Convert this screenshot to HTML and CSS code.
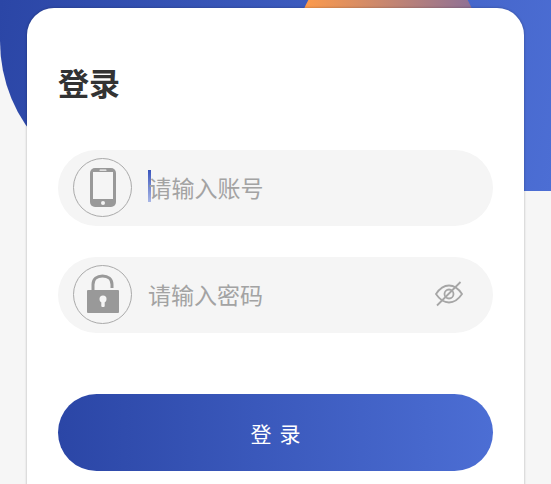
FILE: index.html
```html
<!DOCTYPE html>
<html lang="zh">
<head>
<meta charset="utf-8">
<title>登录</title>
<link rel="stylesheet" href="styles.css">
</head>
<body>
<div class="hero"><div class="sun"></div></div>
<main class="card">
  <h1 class="title">登录</h1>
  <div class="field">
    <span class="badge">
      <svg class="phone" width="28" height="41" viewBox="0 0 28 41"><rect x="1" y="1" width="26" height="39" rx="5" fill="#999"/><rect x="4" y="5" width="20" height="27" fill="#f5f5f5"/><rect x="10.5" y="2.6" width="7" height="1.2" rx=".6" fill="#f5f5f5"/><circle cx="14" cy="36" r="2" fill="#f5f5f5"/></svg>
    </span>
    <span class="caret"></span>
    <span class="hint">请输入账号</span>
  </div>
  <div class="field">
    <span class="badge">
      <svg class="lock" width="34" height="40" viewBox="0 0 34 40"><path d="M7 16V10.500C7 5 11 2 16.500 2S26 5 26 10.500V14" fill="none" stroke="#999" stroke-width="3"/><rect x="1" y="16" width="32" height="23" rx="1" fill="#999"/><circle cx="17" cy="25" r="3.500" fill="#f5f5f5"/><rect x="15.300" y="26" width="3.400" height="7" rx="1" fill="#f5f5f5"/></svg>
    </span>
    <span class="hint hint-gap">请输入密码</span>
    <svg class="eye" width="30" height="28" viewBox="0 0 30 28"><path d="M2 14C6 8 10 5.500 15 5.500S24 8 28 14C24 20 20 22.500 15 22.500S6 20 2 14Z" fill="none" stroke="#a6a6a6" stroke-width="1.800"/><circle cx="15" cy="14" r="4.500" fill="none" stroke="#a6a6a6" stroke-width="1.800"/><path d="M3 25.500 26.500 2" stroke="#a6a6a6" stroke-width="1.800"/></svg>
  </div>
  <button class="submit" type="button">登录</button>
</main>
</body>
</html>
```
FILE: styles.css
```css
html, body {
  margin: 0;
  height: 484px;
  overflow: hidden;
  background: #f6f6f6;
}
body {
  font-family: "Noto Sans CJK SC", "Noto Sans", sans-serif;
  box-sizing: border-box;
  padding: 7.500px 27px 0;
}
.hero {
  position: absolute;
  left: 0;
  top: 0;
  width: 551px;
  height: 191px;
  overflow: hidden;
  border-bottom-left-radius: 150px;
  background: linear-gradient(100deg, #2b46a6 0%, #4c6ed4 100%);
}
.sun {
  position: absolute;
  left: 297px;
  top: -47px;
  width: 182px;
  height: 182px;
  border-radius: 50%;
  background: linear-gradient(90deg, #fb9a4c 5%, #8a6f99 100%);
}
.card {
  position: relative;
  height: 476.500px;
  box-sizing: border-box;
  padding: 0 31px;
  background: #fff;
  border-radius: 27px 27px 0 0;
  box-shadow: 0 0 2px 1px rgba(0, 0, 0, .14);
  display: flex;
  flex-direction: column;
}
.title {
  margin: 51.500px 0 0;
  font-size: 31px;
  line-height: 46px;
  font-weight: 700;
  color: #333;
}
.field {
  flex: none;
  display: flex;
  align-items: center;
  height: 76px;
  margin-top: 45px;
  padding: 0 29px 0 15px;
  background: #f5f5f5;
  border-radius: 38px;
}
.field + .field {
  margin-top: 31px;
}
.badge {
  flex: none;
  width: 59px;
  height: 59px;
  box-sizing: border-box;
  border: 1px solid #aaa;
  border-radius: 50%;
  margin-top: -1px;
  display: flex;
  align-items: center;
  justify-content: center;
}
.caret {
  flex: none;
  width: 2.500px;
  height: 32px;
  margin-left: 16px;
  margin-top: -4px;
  background: linear-gradient(180deg, #3a55bd, #a9b7e6);
}
.hint {
  font-size: 23px;
  line-height: 32px;
  color: #a3a3a3;
  margin-left: -2px;
  margin-top: -2px;
}
.hint-gap {
  margin-left: 16px;
}
.lock {
  margin-top: -2px;
}
.eye {
  margin-left: auto;
  margin-top: -2px;
}
.submit {
  flex: none;
  display: block;
  height: 77px;
  margin-top: 61px;
  border: 0;
  border-radius: 39px;
  background: linear-gradient(90deg, #2b46a6 0%, #4c6ed4 100%);
  color: #fff;
  font-family: inherit;
  font-size: 21px;
  letter-spacing: 8px;
  padding: 0 0 0 8px;
}
```
